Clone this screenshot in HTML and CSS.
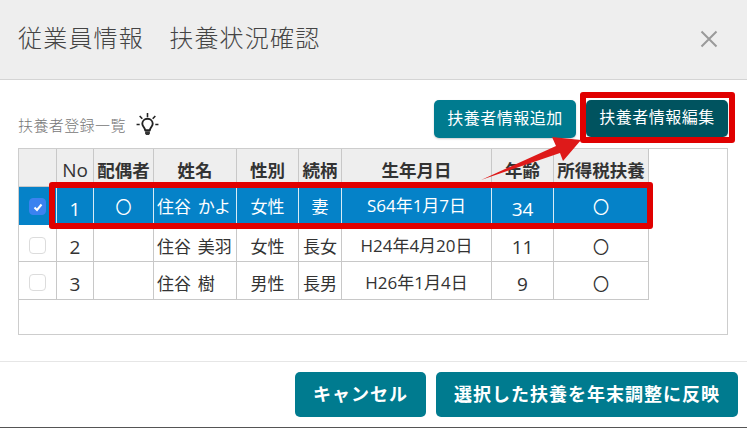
FILE: index.html
```html
<!DOCTYPE html>
<html lang="ja">
<head>
<meta charset="utf-8">
<title>扶養状況確認</title>
<link rel="stylesheet" href="styles.css">
</head>
<body>
<div class="dialog">
  <header class="head">
    <h1 class="title">従業員情報　扶養状況確認</h1>
    <svg class="close" viewBox="0 0 18 18" width="18" height="18"><path d="M1.500 1.500 16.500 16.500M16.500 1.500 1.500 16.500"/></svg>
  </header>
  <main class="body">
    <div class="toolbar">
      <div class="caption">
        <span class="caption-text">扶養者登録一覧</span>
        <svg class="bulb" viewBox="0 0 24 24" width="25" height="25"><path class="rays" d="M12 1v4M4.500 3.800 7 6.500M19.500 3.800 17 6.500M1.500 12h3M19.500 12h3"/><path class="glass" d="M12 6.500c-3.100 0-5 2.300-5 4.800 0 2.300 2.200 3.600 2.800 6.200h4.400c.6-2.600 2.800-3.900 2.800-6.200 0-2.500-1.900-4.800-5-4.800z"/><path class="base" d="M9.700 18.500h4.600v2.300l-1 1.200h-2.600l-1-1.200z"/></svg>
      </div>
      <div class="actions">
        <button class="btn">扶養者情報追加</button>
        <button class="btn btn-active">扶養者情報編集</button>
      </div>
    </div>
    <div class="grid-wrap">
      <table class="grid">
        <colgroup>
          <col class="c1"><col class="c2"><col class="c3"><col class="c4"><col class="c5"><col class="c6"><col class="c7"><col class="c8"><col class="c9">
        </colgroup>
        <thead>
          <tr class="r-head"><th></th><th class="latin">No</th><th>配偶者</th><th>姓名</th><th>性別</th><th>続柄</th><th>生年月日</th><th>年齢</th><th>所得税扶養</th></tr>
        </thead>
        <tbody>
          <tr class="r1 selected">
            <td class="pick"><span class="check checked"><svg viewBox="0 0 12 12" width="12" height="12"><path d="M2.500 6.500 5 9 9.500 3.500"/></svg></span></td>
            <td class="num">1</td><td class="mark">〇</td><td class="name">住谷 かよ</td><td>女性</td><td>妻</td><td class="date">S64年1月7日</td><td class="num">34</td><td class="mark">〇</td>
          </tr>
          <tr class="r2">
            <td class="pick"><span class="check"></span></td>
            <td class="num">2</td><td></td><td class="name">住谷 美羽</td><td>女性</td><td>長女</td><td class="date">H24年4月20日</td><td class="num">11</td><td class="mark">〇</td>
          </tr>
          <tr class="r3">
            <td class="pick"><span class="check"></span></td>
            <td class="num">3</td><td></td><td class="name">住谷 樹</td><td>男性</td><td>長男</td><td class="date">H26年1月4日</td><td class="num">9</td><td class="mark">〇</td>
          </tr>
        </tbody>
      </table>
    </div>
  </main>
  <footer class="foot">
    <button class="btn-lg">キャンセル</button>
    <button class="btn-lg btn-wide">選択した扶養を年末調整に反映</button>
  </footer>
  <div class="red-box red-row"></div>
  <div class="red-box red-btn"></div>
  <svg class="arrow" viewBox="0 0 110 50" width="110" height="50"><polygon points="1,43 76,9 72,0 101,3 83,24 80,16"/></svg>
</div>
</body>
</html>
```
FILE: styles.css
```css
* { box-sizing: border-box; }
html, body { margin: 0; padding: 0; background: #fff; }
body {
  font-family: "Open Sans", "Noto Sans CJK JP", sans-serif;
  color: #333;
  overflow: hidden;
}
.dialog {
  position: relative;
  width: 747px;
  height: 428px;
  display: flex;
  flex-direction: column;
  border-bottom: 1px solid #555;
}
.head {
  height: 80px;
  flex: none;
  background: #eeeeee;
  border-bottom: 1px solid #d4d4d4;
  display: flex;
  align-items: center;
  justify-content: space-between;
  padding: 0 29px 1px 18px;
}
.title {
  margin: 0 0 4px;
  font-family: "Noto Sans CJK JP", sans-serif;
  font-size: 24px;
  font-weight: 300;
  letter-spacing: 1.200px;
  line-height: 32px;
  color: #444;
  white-space: nowrap;
}
.close { fill: none; stroke: #9a9a9a; stroke-width: 2; }
.body {
  flex: none;
  height: 281px;
  padding: 20px 19px 0 18px;
}
.toolbar {
  height: 38px;
  display: flex;
  justify-content: space-between;
  align-items: flex-start;
}
.caption {
  display: flex;
  align-items: center;
  gap: 9px;
  padding-top: 12px;
  height: 38px;
}
.caption-text {
  font-family: "Noto Sans CJK JP", sans-serif;
  font-size: 15px;
  font-weight: 300;
  color: #777;
  line-height: 20px;
  letter-spacing: .4px;
}
.bulb { flex: none; fill: none; stroke: #222; stroke-width: 1.500; margin-bottom: 2px; }
.bulb .glass { stroke-width: 1.800; }
.bulb .base { fill: #333; stroke: none; }
.actions { display: flex; gap: 10px; }
.btn {
  width: 142px;
  height: 38px;
  border: 0;
  border-radius: 5px;
  padding: 0 0 5px;
  background: #007b8f;
  color: #fff;
  font-family: "Noto Sans CJK JP", sans-serif;
  font-size: 16px;
  font-weight: 400;
  letter-spacing: .5px;
  box-shadow: 0 1px 2px rgba(0, 0, 0, .2);
}
.btn-active { background: #00535f; height: 37px; }
.grid-wrap {
  margin-top: 10px;
  width: 710px;
  height: 187px;
  border: 1px solid #cdcdcd;
}
.grid {
  table-layout: fixed;
  border-collapse: separate;
  border-spacing: 0;
  width: 630px;
  font-family: "Noto Sans CJK JP", sans-serif;
  font-size: 17px;
  line-height: 22px;
  color: #333;
}
.c1 { width: 38px; }
.c2 { width: 37px; }
.c3 { width: 60px; }
.c4 { width: 83px; }
.c5 { width: 62px; }
.c6 { width: 43px; }
.c7 { width: 150px; }
.c8 { width: 62px; }
.c9 { width: 95px; }
.grid th, .grid td {
  padding: 0;
  text-align: center;
  white-space: nowrap;
  overflow: hidden;
  border-right: 1px solid #c8c8c8;
  border-bottom: 1px solid #c8c8c8;
  vertical-align: middle;
}
.grid th {
  background: #eeeeee;
  font-weight: 700;
  padding-top: 5px;
  font-size: 17.500px;
}
.grid th.latin { font-family: "Open Sans", sans-serif; font-weight: 400; font-size: 19px; }
.r-head { height: 38px; }
.r1 { height: 38px; }
.r2 { height: 37px; }
.r3 { height: 38px; }
.grid .num { font-family: "Open Sans", sans-serif; font-size: 19px; padding-top: 6px; }
.grid .date { font-family: "Open Sans", "Noto Sans CJK JP", sans-serif; font-size: 17px; }
.grid .mark { font-size: 16px; }
.grid .name { text-align: left; padding-left: 3px; word-spacing: 3px; }
.r2 td, .r3 td { padding-top: 5px; }
.grid .r2 .num, .grid .r3 .num { padding-top: 7px; }
.grid .pick { padding: 0; }
.selected td { background: #0582c8; color: #fff; border-right-color: #d8ecf6; border-bottom-color: #0582c8; }
.check {
  display: block;
  width: 17px;
  height: 17px;
  margin: 4px 0 0 10px;
  border: 1px solid #dcdcdc;
  border-radius: 4px;
  background: #fff;
}
.check.checked {
  background: #3b82f0;
  border-color: #3b82f0;
  margin-top: 2px;
  display: flex;
  align-items: center;
  justify-content: center;
}
.check svg { fill: none; stroke: #fff; stroke-width: 2; }
.foot {
  flex: 1;
  border-top: 1px solid #e6e6e6;
  display: flex;
  justify-content: flex-end;
  gap: 10px;
  padding: 10px 9px 0 0;
}
.btn-lg {
  width: 131px;
  height: 45px;
  border: 0;
  border-radius: 5px;
  padding: 0 0 3px;
  background: #007b8f;
  color: #fff;
  font-family: "Noto Sans CJK JP", sans-serif;
  font-size: 18px;
  font-weight: 700;
  letter-spacing: 1px;
}
.btn-wide { width: 302px; }
.red-box {
  position: absolute;
  border: 6px solid #e00000;
  border-radius: 3px;
  pointer-events: none;
}
.red-row { left: 49px; top: 182px; width: 604px; height: 47px; }
.red-btn { left: 580px; top: 92px; width: 155px; height: 51px; }
.arrow { position: absolute; left: 480px; top: 137px; fill: #de1a1a; }
```
